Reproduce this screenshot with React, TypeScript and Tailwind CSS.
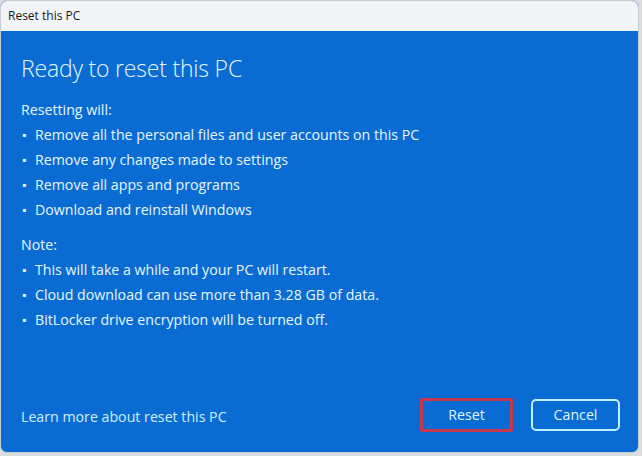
import React from 'react';

const resetting = [
  'Remove all the personal files and user accounts on this PC',
  'Remove any changes made to settings',
  'Remove all apps and programs',
  'Download and reinstall Windows',
];

const notes = [
  'This will take a while and your PC will restart.',
  'Cloud download can use more than 3.28 GB of data.',
  'BitLocker drive encryption will be turned off.',
];

function BulletList({ items }: { items: string[] }) {
  return (
    <ul className="flex flex-col">
      {items.map((t) => (
        <li key={t} className="flex h-[25px] items-center">
          <span className="w-[14px] pl-[1px] text-[12px]">▪</span>
          <span>{t}</span>
        </li>
      ))}
    </ul>
  );
}

export default function App(): React.ReactElement {
  return (
    <div
      className="h-[456px] w-[642px] overflow-hidden bg-[#d9dde2]"
      style={{ fontFamily: '"Open Sans", "Noto Sans", sans-serif' }}
    >
      <div className="flex h-[453px] w-[639px] flex-col overflow-hidden rounded-[7px] border border-[#c9ccd0] bg-[#0a6cd3]">
        <div className="flex h-[30px] items-center bg-[#f3f4f7] px-[7px] text-[12px] text-[#1a1a1a]">
          Reset this PC
        </div>
        <div className="flex flex-1 flex-col pr-[18px] pl-[20px] text-[14.2px] text-[#e6f6ff]">
          <h1 className="mt-[20px] text-[23px] leading-[34px] font-light tracking-[-0.2px]">
            Ready to reset this PC
          </h1>
          <div className="mt-[12px] flex h-[25px] items-center">Resetting will:</div>
          <BulletList items={resetting} />
          <div className="mt-[10px] flex h-[25px] items-center">Note:</div>
          <BulletList items={notes} />
          <div className="mt-auto mb-[20px] flex items-center justify-between">
            <span className="pt-[3px] text-[#cfeeff]">Learn more about reset this PC</span>
            <div className="flex items-center gap-[18px]">
              <div className="flex h-[34px] w-[93px] items-center justify-center rounded-[2px] border-[3px] border-[#c8364f] text-[#dff4ff]">
                Reset
              </div>
              <div className="flex h-[32px] w-[89px] items-center justify-center rounded-[5px] border-2 border-[#bff0ff] text-[#dff4ff]">
                Cancel
              </div>
            </div>
          </div>
        </div>
      </div>
    </div>
  );
}
